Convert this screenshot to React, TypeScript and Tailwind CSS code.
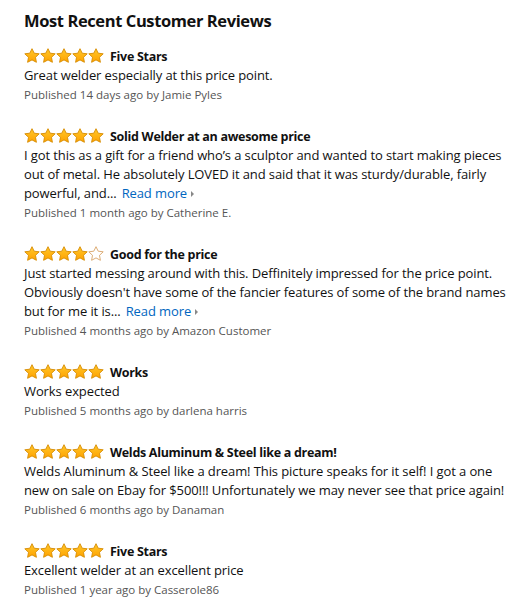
import React from "react";

type Review = {
  rating: number;
  title: string;
  lines: string[];
  readMore?: boolean;
  published: string;
};

const reviews: Review[] = [
  { rating: 5, title: "Five Stars", lines: ["Great welder especially at this price point."], published: "Published 14 days ago by Jamie Pyles" },
  {
    rating: 5,
    title: "Solid Welder at an awesome price",
    lines: [
      "I got this as a gift for a friend who\u2019s a sculptor and wanted to start making pieces",
      "out of metal. He absolutely LOVED it and said that it was sturdy/durable, fairly",
      "powerful, and...",
    ],
    readMore: true,
    published: "Published 1 month ago by Catherine E.",
  },
  {
    rating: 4,
    title: "Good for the price",
    lines: [
      "Just started messing around with this. Deffinitely impressed for the price point.",
      "Obviously doesn't have some of the fancier features of some of the brand names",
      "but for me it is...",
    ],
    readMore: true,
    published: "Published 4 months ago by Amazon Customer",
  },
  { rating: 5, title: "Works", lines: ["Works expected"], published: "Published 5 months ago by darlena harris" },
  {
    rating: 5,
    title: "Welds Aluminum & Steel like a dream!",
    lines: [
      "Welds Aluminum & Steel like a dream! This picture speaks for it self! I got a one",
      "new on sale on Ebay for $500!!! Unfortunately we may never see that price again!",
    ],
    published: "Published 6 months ago by Danaman",
  },
  { rating: 5, title: "Five Stars", lines: ["Excellent welder at an excellent price"], published: "Published 1 year ago by Casserole86" },
];

function Star({ filled, id }: { filled: boolean; id: string }) {
  return (
    <svg width="16" height="16" viewBox="0 0 16 16" className="block">
      <defs>
        <linearGradient id={id} x1="0" y1="0" x2="0" y2="1">
          <stop offset="0" stopColor="#FFC82A" />
          <stop offset="1" stopColor="#FFA200" />
        </linearGradient>
      </defs>
      <path
        d="M8 0.7 L10.2 5.2 L15.2 5.8 L11.5 9.3 L12.4 14.3 L8 11.9 L3.6 14.3 L4.5 9.3 L0.8 5.8 L5.8 5.2 Z"
        fill={filled ? `url(#${id})` : "#ffffff"}
        stroke={filled ? "#D68B00" : "#D8A468"}
        strokeWidth="0.9"
        strokeLinejoin="round"
      />
    </svg>
  );
}

function Stars({ rating, idx }: { rating: number; idx: number }) {
  return (
    <div className="flex">
      {[0, 1, 2, 3, 4].map((i) => (
        <Star key={i} filled={i < rating} id={`g${idx}-${i}`} />
      ))}
    </div>
  );
}

export default function App() {
  return (
    <div
      className="w-[527px] h-[605px] bg-white pl-[24px] pt-[10px] text-[#111111]"
      style={{ fontFamily: '"Open Sans", "Noto Sans", sans-serif' }}
    >
      <h2 className="text-[16.5px] font-bold leading-[22px] tracking-[-0.4px]">Most Recent Customer Reviews</h2>
      <div className="mt-[14px] flex flex-col gap-[21px]">
        {reviews.map((r, idx) => (
          <div key={idx} className="flex flex-col">
            <div className="flex items-center gap-[6px] h-[20px]">
              <Stars rating={r.rating} idx={idx} />
              <span className="text-[12.5px] font-bold leading-[19px] tracking-[-0.3px]">{r.title}</span>
            </div>
            <div className="text-[13px] leading-[19px] tracking-[-0.1px]">
              {r.lines.map((l, i) => (
                <div key={i} className="whitespace-nowrap">
                  {l}
                  {r.readMore && i === r.lines.length - 1 && (
                    <span className="text-[#0066c0] ml-[5px]">
                      Read more
                      <span className="inline-block ml-[4px] align-middle w-0 h-0 border-y-[3px] border-y-transparent border-l-[3px] border-l-[#888] mb-[2px]" />
                    </span>
                  )}
                </div>
              ))}
            </div>
            <div className="text-[11.5px] leading-[20px] text-[#555555]">{r.published}</div>
          </div>
        ))}
      </div>
    </div>
  );
}
